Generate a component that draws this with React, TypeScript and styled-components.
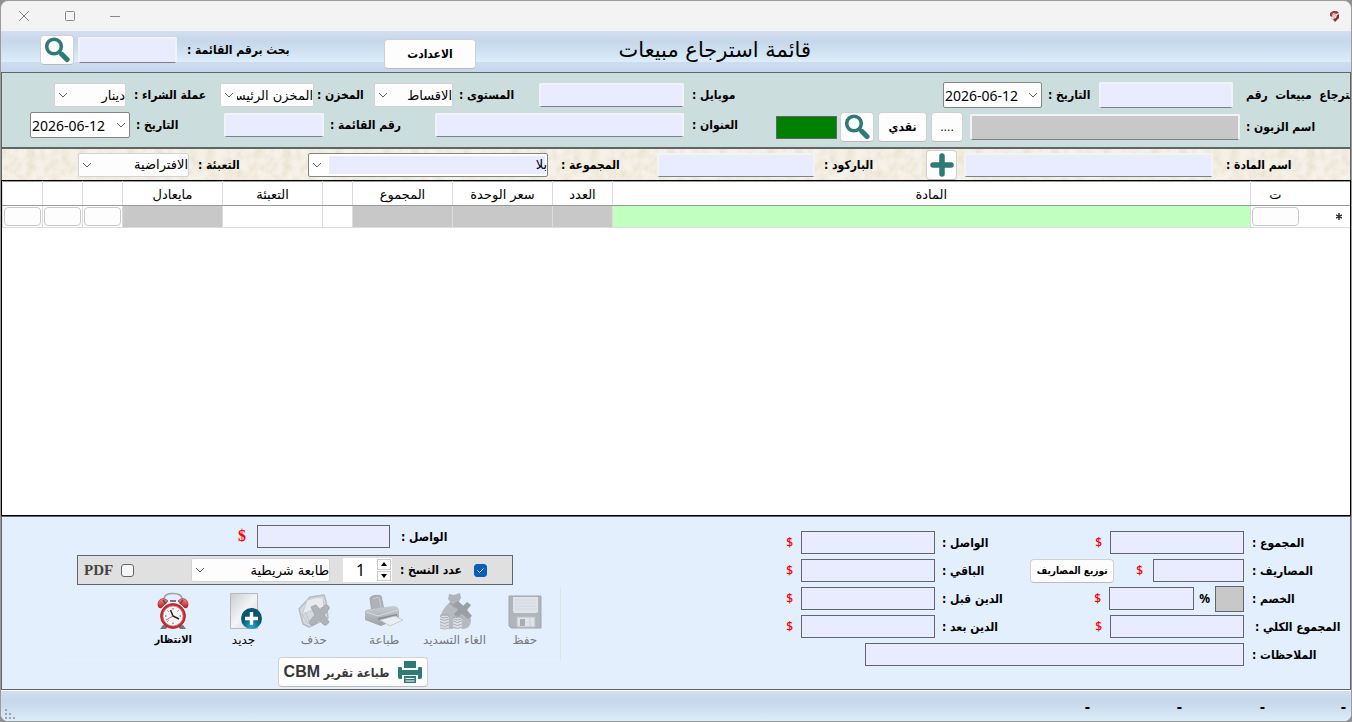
import React from "react";
import styled, { createGlobalStyle, css } from "styled-components";

const sans = `"DejaVu Sans", "Noto Sans", sans-serif`;
const narrow = `"DejaVu Sans Condensed", "DejaVu Sans", sans-serif`;
const teal = "#2f7a75";
const lavender = "#e9ecfe";
const chevron = `url("data:image/svg+xml,%3Csvg xmlns='http://www.w3.org/2000/svg' width='10' height='6'%3E%3Cpath d='M1 1l4 4 4-4' fill='none' stroke='%23606060'/%3E%3C/svg%3E")`;
const parchment = `url("data:image/svg+xml,%3Csvg xmlns='http://www.w3.org/2000/svg' width='128' height='64'%3E%3Cfilter id='n' x='0' y='0' width='100%25' height='100%25'%3E%3CfeTurbulence type='fractalNoise' baseFrequency='.12 .09' numOctaves='4' seed='4' stitchTiles='stitch'/%3E%3CfeColorMatrix values='0 0 0 0 .76 0 0 0 0 .70 0 0 0 0 .54 1.2 0 0 0 -.38'/%3E%3C/filter%3E%3Crect width='128' height='64' fill='%23f6f2e9'/%3E%3Crect width='128' height='64' filter='url(%23n)'/%3E%3C/svg%3E")`;

const GlobalStyle = createGlobalStyle`
  * { box-sizing: border-box; }
  body { margin: 0; background: #8d8f90; font-family: ${sans}; font-size: 12px; color: #000; }
  button, input, select { font-family: inherit; font-size: inherit; color: inherit; margin: 0; }
`;

const Window = styled.div`
  display: flex;
  flex-direction: column;
  min-height: 100vh;
  border: 1px solid #9b9b9b;
  border-radius: 8px;
  overflow: hidden;
  background: #f3f3f3;
`;

const TitleBar = styled.div`
  display: flex;
  flex: none;
  align-items: center;
  justify-content: space-between;
  height: 30px;
  padding: 0 11px 0 15px;
`;

const Caption = styled.div`
  display: flex;
  gap: 30px;
`;

const CaptionButton = styled.button`
  width: 16px;
  height: 16px;
  padding: 0;
  border: 0;
  background: none;
  svg { display: block; }
`;

const Header = styled.header`
  display: grid;
  flex: none;
  grid-template-columns: 540fr 195px 140fr 92px 207px 99fr 4px 34px 39px;
  align-items: center;
  height: 41px;
  padding-bottom: 4px;
  background: linear-gradient(#d4dff0, #c6d7eb 9px, #c9daed 14px, #dceef9 31px, #cfdcee 31px, #c6d7eb);
`;

const Title = styled.h1`
  grid-column: 2;
  margin: 0;
  font-size: 21px;
  font-weight: 400;
  line-height: 30px;
  white-space: nowrap;
`;

const Label = styled.label<{ $pad?: number }>`
  min-width: 0;
  padding-left: ${(p) => p.$pad ?? 6}px;
  font-family: ${narrow};
  font-weight: 700;
  font-size: 12px;
  line-height: 20px;
  text-align: left;
  white-space: nowrap;
`;

const ClippedLabel = styled(Label)`
  display: flex;
  justify-content: flex-end;
  overflow: hidden;
`;

const field = css`
  width: 100%;
  min-width: 0;
  padding: 0 4px;
  border-radius: 2px;
  outline: none;
`;

const TextBox = styled.input<{ $h?: number; $muted?: boolean }>`
  ${field}
  height: ${(p) => p.$h ?? 24}px;
  border: 2px solid #f1f3f5;
  border-bottom: 1px solid #7d8284;
  background: ${(p) => (p.$muted ? "#c8c8c8" : lavender)};
`;

const FlatBox = styled.input<{ $w?: number; $muted?: boolean }>`
  flex: none;
  width: ${(p) => p.$w ?? 134}px;
  height: ${(p) => (p.$muted ? 26 : 23)}px;
  padding: 0 4px;
  border: 1px solid #62666a;
  background: ${(p) => (p.$muted ? "#c8c8c8" : lavender)};
  outline: none;
`;

const DropDown = styled.select<{ $editable?: boolean; $w?: number }>`
  ${field}
  ${(p) => p.$w && `flex: none; width: ${p.$w}px;`}
  appearance: none;
  height: 24px;
  padding: 0 0 0 16px;
  border: 1px solid ${(p) => (p.$editable ? "#858585" : "#d3d3d3")};
  font-size: 13px;
  background: ${chevron} no-repeat 3px 8px, #fdfdfd;
  ${(p) =>
    p.$editable &&
    css`
      background: ${chevron} no-repeat 3px 8px,
        linear-gradient(${lavender}, ${lavender}) no-repeat 20px 2px / calc(100% - 22px) calc(100% - 4px), #fff;
    `}
`;

const DateBox = styled.input`
  ${field}
  height: 26px;
  padding: 0 2px 0 1px;
  border: 1px solid #858585;
  direction: ltr;
  font-family: "Noto Sans", sans-serif;
  font-size: 14px;
  background: ${chevron} no-repeat right 3px center, #fff;
`;

const Button = styled.button<{ $h?: number; $plain?: boolean }>`
  display: flex;
  align-items: center;
  justify-content: center;
  height: ${(p) => p.$h ?? 30}px;
  min-width: 0;
  padding: 0;
  border: 1px solid #d0d0d0;
  border-bottom-color: #bbb;
  border-radius: 4px;
  background: #fdfdfd;
  font-family: ${narrow};
  font-weight: ${(p) => (p.$plain ? 400 : 700)};
  white-space: nowrap;
`;

const SettingsButton = styled(Button)`
  margin-top: 8px;
`;

const SplitButton = styled(Button)`
  width: 84px;
  margin-right: 12px;
  font-size: 10px;
`;

const Details = styled.section`
  display: grid;
  flex: none;
  grid-template-columns: 574fr 774fr;
  padding: 9px 0 5px;
  border: 1px solid #5f6464;
  border-bottom-width: 2px;
  background: #cbdddd;
`;

const Stack = styled.div`
  display: flex;
  flex-direction: column;
  gap: 4px;
  min-width: 0;
`;

const FieldRow = styled.div<{ $cols: string; $h?: number }>`
  display: grid;
  grid-template-columns: ${(p) => p.$cols};
  align-items: center;
  height: ${(p) => p.$h ?? 26}px;
`;

const Balance = styled.div`
  height: 23px;
  border: 1px solid #5f6464;
  background: #008000;
`;

const ItemBar = styled.section`
  flex: none;
  border: solid #5f6464;
  border-width: 0 1px;
  background: ${parchment};
`;

const TableArea = styled.main`
  flex: 1;
  border: 1px solid #000;
  background: #fff;
`;

const Table = styled.table`
  width: 100%;
  border-collapse: collapse;
  table-layout: fixed;
  border-top: 1px solid #9a9a9a;
`;

const Th = styled.th`
  height: 24px;
  padding: 2px 0 0;
  border-bottom: 1px solid #9a9a9a;
  border-left: 1px solid #dcdcdc;
  font-weight: 400;
  font-size: 13px;
  line-height: 18px;
`;

const CornerCell = styled.td`
  border-bottom: 1px solid #9a9a9a;
`;

const Td = styled.td<{ $bg?: string }>`
  height: 22px;
  padding: 0 1px;
  border-bottom: 1px solid #dcdcdc;
  border-left: 1px solid #dcdcdc;
  background: ${(p) => p.$bg ?? "#fff"};
`;

const RowMarker = styled.td`
  padding: 0 8px;
  border-bottom: 1px solid #dcdcdc;
  svg { display: block; }
`;

const CellButton = styled.button`
  display: block;
  width: 100%;
  height: 19px;
  border: 1px solid #c9c9c9;
  border-radius: 4px;
  background: #fdfdfd;
`;

const Footer = styled.footer`
  display: flex;
  flex: none;
  justify-content: space-between;
  height: 174px;
  padding: 8px 0 0 60px;
  border: 1px solid #62666a;
  background: #e3effd;
`;

const Totals = styled.div`
  display: grid;
  grid-template-columns: 106px 214px 27px 68px 134px 22px;
  grid-auto-rows: 23px;
  row-gap: 5px;
  align-items: center;
  padding-top: 6px;
`;

const Cluster = styled.div<{ $gap?: number; $span?: number }>`
  display: flex;
  align-items: center;
  gap: ${(p) => p.$gap ?? 8}px;
  min-width: 0;
  ${(p) => p.$span && `grid-column: span ${p.$span};`}
`;

const Currency = styled.span<{ $big?: boolean }>`
  color: #f00;
  font-family: ${(p) => (p.$big ? `"Liberation Serif", serif` : `"Noto Sans", sans-serif`)};
  font-weight: ${(p) => (p.$big ? 700 : 500)};
  font-size: ${(p) => (p.$big ? 16 : 12)}px;
`;

const Percent = styled.span`
  font: 700 12px "Noto Sans", sans-serif;
`;

const Actions = styled.div`
  display: flex;
  flex-direction: column;
  width: 499px;
`;

const Received = styled.div`
  display: grid;
  grid-template-columns: 123px 133px 20px;
  align-items: center;
  padding-right: 48px;
`;

const PrintBar = styled.div`
  display: flex;
  align-items: center;
  width: 436px;
  height: 30px;
  margin: 7px 48px 0 0;
  padding: 0 25px 0 6px;
  border: 1px solid #62666a;
  background: #e0e0e0;
`;

const Check = styled.input`
  appearance: none;
  flex: none;
  width: 13px;
  height: 13px;
  border: 1px solid #62666a;
  border-radius: 3px;
  background: #f6f6f6;
  &:checked {
    border-color: #0a5db8;
    background: url("data:image/svg+xml,%3Csvg xmlns='http://www.w3.org/2000/svg' width='11' height='11'%3E%3Cpath d='M2.500 5.500l2 2 4-4' fill='none' stroke='white'/%3E%3C/svg%3E") #0a5db8;
  }
`;

const CopiesLabel = styled(Label)`
  width: 82px;
  padding-left: 8px;
`;

const Spinner = styled.div`
  display: flex;
  width: 49px;
  height: 24px;
  padding: 1px;
  background: #fff;
`;

const SpinButtons = styled.div`
  display: flex;
  flex-direction: column;
  gap: 1px;
  width: 14px;
`;

const SpinButton = styled.button`
  display: grid;
  place-items: center;
  flex: 1;
  padding: 0;
  border: 1px solid #ccc;
  background: #fafafa;
`;

const SpinValue = styled.input`
  flex: 1;
  min-width: 0;
  padding: 0;
  border: 0;
  background: none;
  font: 16px "Noto Sans", sans-serif;
  text-align: center;
`;

const PrinterPick = styled(DropDown)`
  margin-right: 13px;
`;

const PdfLabel = styled.label`
  display: flex;
  align-items: center;
  gap: 8px;
  margin-right: auto;
  color: #444;
  font: 700 15px "Liberation Serif", serif;
`;

const Toolbar = styled.div`
  display: flex;
  height: 73px;
  margin-top: 3px;
  padding: 4px 0 0 76px;
  border-bottom: 1px solid #eef1f4;
  border-right: 1px solid #e0e3e6;
`;

const Tool = styled.button`
  display: flex;
  flex: 1 1 70px;
  flex-direction: column;
  align-items: center;
  gap: 1px;
  min-width: 0;
  padding: 0;
  border: 0;
  background: none;
  font-size: 12px;
  line-height: 18px;
  white-space: nowrap;
  &:disabled { color: #77797d; }
  &:disabled svg { opacity: 0.85; }
  &:last-child { font-weight: 700; font-family: ${narrow}; font-size: 11px; }
  svg { display: block; flex: none; }
`;

const ReportButton = styled(Button)`
  position: relative;
  align-self: flex-start;
  gap: 9px;
  width: 150px;
  margin: -4px 133px 0 0;
  color: #383838;
  font-size: 12px;
`;

const Latin = styled.span`
  font: 700 16px "Liberation Sans", sans-serif;
`;

const StatusBar = styled.div`
  display: flex;
  flex: none;
  align-items: center;
  height: 31px;
  padding: 2px 5px 0 3px;
  border-top: 1px solid #fff;
  background: linear-gradient(#d4dff0, #c6d7eb 9px, #c9daed 14px, #dceef9);
  font: 700 16px "Liberation Sans", sans-serif;
`;

const StatusCell = styled.span<{ $w: number }>`
  flex: none;
  width: ${(p) => p.$w}px;
`;

const Grip = styled.svg`
  align-self: flex-end;
  margin: 0 auto 2px 0;
`;

const Magnifier = () => (
  <svg width="26" height="26" viewBox="0 0 26 26" fill="none" stroke={teal} aria-hidden="true">
    <circle cx="10" cy="9.500" r="7.300" strokeWidth="3.600" />
    <path d="M15.500 15l2 2" strokeWidth="3.600" />
    <path d="M18 17.500l5 5" strokeWidth="5.200" strokeLinecap="round" />
  </svg>
);

const Plus = () => (
  <svg width="24" height="24" viewBox="0 0 24 24" stroke={teal} strokeWidth="5.500" strokeLinecap="round" aria-hidden="true">
    <path d="M12 3v18M3 12h18" />
  </svg>
);

const Clock = () => (
  <svg width="36" height="38" viewBox="0 0 36 38" aria-hidden="true">
    <defs>
      <linearGradient id="bell" x2="0" y2="1"><stop stopColor="#ff8a80" /><stop offset="1" stopColor="#c4161c" /></linearGradient>
    </defs>
    <path d="M9 7Q9 1.500 18 1.500T27 7" fill="none" stroke="#9aa0a8" strokeWidth="1.600" />
    <path d="M8 33l-3 4h6l2-3zM28 33l3 4h-6l-2-3z" fill="#70757b" />
    <path d="M3 13C3 6 9 5 13 9L6 16Q3 16 3 13zM33 13C33 6 27 5 23 9l7 7q3 0 3-3z" fill="url(#bell)" stroke="#8e1014" strokeWidth=".6" />
    <path d="M8 8l3 4M28 8l-3 4M15 9h6" stroke="#4d5156" strokeWidth="1.600" />
    <circle cx="18" cy="24" r="12.500" fill="#d8282a" stroke="#8e1014" strokeWidth=".6" />
    <circle cx="18" cy="24" r="10" fill="#f3f4f5" stroke="#a99" strokeWidth=".6" />
    <path d="M18 16v1.500M18 30.500V32M10 24h1.500M24.500 24H26M12.500 18.500l1 1M23.500 18.500l-1 1M12.500 29.500l1-1" stroke="#555" />
    <path d="M15.500 18l2.500 6 6 3" fill="none" stroke="#222" strokeWidth="1.500" />
    <path d="M18 24l-7 4" stroke="#e04040" strokeWidth=".8" />
  </svg>
);

const NewPage = () => (
  <svg width="36" height="38" viewBox="0 0 36 38" aria-hidden="true">
    <defs>
      <linearGradient id="sheet" x2="1" y2="1"><stop stopColor="#c9ced2" /><stop offset=".5" stopColor="#f2f4f5" /><stop offset="1" stopColor="#d5d9dc" /></linearGradient>
      <radialGradient id="orb" cy=".9"><stop stopColor="#22a9d0" /><stop offset="1" stopColor="#0b5674" /></radialGradient>
    </defs>
    <path d="M4.500 1.500h27v35h-27z" fill="url(#sheet)" stroke="#b4b9bd" />
    <circle cx="25.500" cy="26.500" r="10.500" fill="url(#orb)" />
    <path d="M25.500 20v13M19 26.500h13" stroke="#fff" strokeWidth="3.400" />
  </svg>
);

const Discard = () => (
  <svg width="36" height="38" viewBox="0 0 36 38" aria-hidden="true">
    <path d="M3 17l11-12 14-2 2 6 2 17-19 9-6-3z" fill="#d3d6db" stroke="#b0b4ba" strokeWidth="1.500" strokeLinejoin="round" />
    <path d="M11 8q8-3 16-3l1 10-14 4-8 4z" fill="#e8eaee" stroke="#c2c6cb" />
    <path d="M6 22l6 10M9 20l5 11" stroke="#bcc0c5" />
    <path d="M15 15l5-2 4 5 5-5q5 0 4 4l-5 6 5 7q-2 4-5 3l-5-5-5 5q-4 1-5-3l6-7z" fill="#a6aab0" stroke="#999da3" strokeLinejoin="round" />
  </svg>
);

const Printer = () => (
  <svg width="42" height="38" viewBox="0 0 42 38" aria-hidden="true">
    <defs><linearGradient id="prn" x2="0" y2="1"><stop stopColor="#c3c6ca" /><stop offset="1" stopColor="#8f9398" /></linearGradient></defs>
    <path d="M7 6q1-2 5-2.500T18 4l3 14-12 3z" fill="#a4a8ad" stroke="#94989d" />
    <path d="M10 7q4-2 6-1.500l2 10" stroke="#c4c7cb" fill="none" />
    <path d="M2 19q2-2 7-2l21-3q5 0 6 4v8l-18 8L2 28z" fill="url(#prn)" />
    <path d="M3 20l12 4 20-6" fill="none" stroke="#d4d7da" />
    <path d="M15 27l19-4" stroke="#777b80" strokeWidth="2" />
    <path d="M17 28l15-4 8 4-13 6z" fill="#eceef1" stroke="#b6babf" strokeWidth=".8" />
  </svg>
);

const MoneyBag = () => (
  <svg width="36" height="38" viewBox="0 0 36 38" aria-hidden="true">
    <path d="M12 2l5 1 6-2 1 5-3 5h-7l-3-4z" fill="#a6aab0" />
    <path d="M13 10h9q11 8 12 18 0 9-9 9H10Q3 34 3 26q2-9 10-16z" fill="#adb1b7" />
    <path d="M13 11l5 4 5-4" stroke="#8e9298" fill="none" strokeWidth="1.500" />
    <path d="M16 12l5-3 5 5 4-4 4 3-4 5 5 6-4 3-6-5-5 4-3-4 4-4z" fill="#8e9297" />
    <path d="M3 24h9v13H3zM16 26h9v11h-9z" fill="#d9dce0" />
    <g fill="none" stroke="#a2a6ac">
      <ellipse cx="7.500" cy="24" rx="4.500" ry="1.800" /><path d="M3 27q4.500 3 9 0M3 30q4.500 3 9 0M3 33q4.500 3 9 0M3 36q4.500 2 9 0" />
      <ellipse cx="20.500" cy="26" rx="4.500" ry="1.800" /><path d="M16 29q4.500 3 9 0M16 32q4.500 3 9 0M16 35q4.500 3 9 0" />
    </g>
  </svg>
);

const Disk = () => (
  <svg width="36" height="38" viewBox="0 0 36 38" aria-hidden="true">
    <path d="M2 4h32v32H4l-2-2z" fill="#a7abb1" stroke="#979ba1" strokeLinejoin="round" />
    <path d="M6 5h25v15q-1 1-2 1H8q-2 0-2-2z" fill="#dfe2e6" />
    <path d="M8 8h21M8 11h21M8 14h21M8 17h21" stroke="#d2d5da" />
    <path d="M10 25h18v10H10z" fill="#dfe2e5" stroke="#b4b8bd" />
    <path d="M13 27h5v7h-5z" fill="#9ea2a8" />
    <path d="M23 26v9" stroke="#c3c6ca" />
  </svg>
);

const TealPrinter = () => (
  <svg width="24" height="24" viewBox="0 0 24 24" fill={teal} aria-hidden="true">
    <path d="M6 1h12v7H6zM0 8q0-1 1-1h2q1 0 1 2v1h16V9q0-2 1-2h2q1 0 1 1v9q0 2-2 2h-2v-4H4v4H2q-2 0-2-2zM6 16h12v7H6z" />
    <path d="M7.500 18.500h9M7.500 21h9" stroke="#fff" />
  </svg>
);

const Emblem = () => (
  <svg width="10" height="11" viewBox="0 0 10 11" aria-hidden="true">
    <path d="M0 2l3-2 4 0 2 2-3 1-3-1-1 4L0 5z" fill="#a8383f" />
    <path d="M9 3v4l-4 4-2-3 3-1 1-3z" fill="#8e2a32" />
    <path d="M3 3l3 1-2 3-2-1zM1 7l3 3" fill="#d9dadd" stroke="#b8a0a4" strokeWidth=".6" />
  </svg>
);

const columns: { title: string; width?: number; bg?: string; button?: boolean }[] = [
  { title: "ت", width: 50, button: true },
  { title: "المادة", bg: "#c0ffc0" },
  { title: "العدد", width: 60, bg: "#c8c8c8" },
  { title: "سعر الوحدة", width: 100, bg: "#c8c8c8" },
  { title: "المجموع", width: 100, bg: "#c8c8c8" },
  { title: "", width: 30 },
  { title: "التعبئة", width: 100 },
  { title: "مايعادل", width: 100, bg: "#c8c8c8" },
  { title: "", width: 40, button: true },
  { title: "", width: 40, button: true },
  { title: "", width: 40, button: true },
];

const tools = [
  { text: "حفظ", icon: <Disk />, disabled: true },
  { text: "الغاء التسديد", icon: <MoneyBag />, disabled: true },
  { text: "طباعة", icon: <Printer />, disabled: true },
  { text: "حذف", icon: <Discard />, disabled: true },
  { text: "جديد", icon: <NewPage /> },
  { text: "الانتظار", icon: <Clock /> },
];

const statusWidths = [81, 83, 92, 92];

export default function App() {
  return (
    <>
      <GlobalStyle />
      <Window>
        <TitleBar>
          <Caption>
            <CaptionButton aria-label="إغلاق">
              <svg width="16" height="16" fill="none" stroke="#888"><path d="M3 3l10 10M13 3L3 13" /></svg>
            </CaptionButton>
            <CaptionButton aria-label="تكبير">
              <svg width="16" height="16" fill="none" stroke="#888"><rect x="3.500" y="3.500" width="9" height="9" rx="1" /></svg>
            </CaptionButton>
            <CaptionButton aria-label="تصغير">
              <svg width="16" height="16" fill="none" stroke="#888"><path d="M2 8.500h10" /></svg>
            </CaptionButton>
          </Caption>
          <Emblem />
        </TitleBar>

        <Header dir="rtl">
          <Title>قائمة استرجاع مبيعات</Title>
          <span />
          <SettingsButton>الاعدادت</SettingsButton>
          <Label htmlFor="find" $pad={10}>بحث برقم القائمة :</Label>
          <TextBox id="find" $h={26} />
          <span />
          <Button aria-label="بحث"><Magnifier /></Button>
        </Header>

        <Details dir="rtl">
          <Stack>
            <FieldRow $cols="117px 134fr 57px 99px 167fr">
              <ClippedLabel htmlFor="return-no" $pad={13}><span>استرجاع&nbsp; مبيعات&nbsp; رقم</span></ClippedLabel>
              <TextBox id="return-no" $h={26} />
              <Label htmlFor="date1">التاريخ :</Label>
              <DateBox id="date1" defaultValue="2026-06-12" />
            </FieldRow>
            <FieldRow $h={30} $cols="110px 270fr 7px 32px 4px 49px 4px 34px 3px 61px">
              <Label htmlFor="customer">اسم الزبون :</Label>
              <TextBox id="customer" $h={26} $muted readOnly />
              <span />
              <Button $plain>....</Button>
              <span />
              <Button>نقدي</Button>
              <span />
              <Button aria-label="بحث"><Magnifier /></Button>
              <span />
              <Balance />
            </FieldRow>
          </Stack>
          <Stack>
            <FieldRow $cols="92px 145fr 86px 79px 60px 94px 94px 72px 52px">
              <Label htmlFor="mobile" $pad={8}>موبايل :</Label>
              <TextBox id="mobile" />
              <Label htmlFor="level">المستوى :</Label>
              <DropDown id="level"><option>الاقساط</option></DropDown>
              <Label htmlFor="store" $pad={3}>المخزن :</Label>
              <DropDown id="store"><option>المخزن الرئيسي</option></DropDown>
              <Label htmlFor="currency" $pad={8}>عملة الشراء :</Label>
              <DropDown id="currency"><option>دينار</option></DropDown>
            </FieldRow>
            <FieldRow $cols="92px 249fr 111px 100px 94px 100px 28px">
              <Label htmlFor="address" $pad={8}>العنوان :</Label>
              <TextBox id="address" />
              <Label htmlFor="list-no">رقم القائمة :</Label>
              <TextBox id="list-no" />
              <Label htmlFor="date2">التاريخ :</Label>
              <DateBox id="date2" defaultValue="2026-06-12" />
            </FieldRow>
          </Stack>
        </Details>

        <ItemBar dir="rtl">
          <FieldRow $h={31} $cols="137px 249fr 7px 31px 111px 158fr 109px 240fr 119px 111px 76px">
            <Label htmlFor="item" $pad={13}>اسم المادة :</Label>
            <TextBox id="item" />
            <span />
            <Button aria-label="اضافة"><Plus /></Button>
            <Label htmlFor="barcode" $pad={9}>الباركود :</Label>
            <TextBox id="barcode" />
            <Label htmlFor="group" $pad={13}>المجموعة :</Label>
            <DropDown id="group" $editable><option>بلا</option></DropDown>
            <Label htmlFor="pack" $pad={9}>التعبئة :</Label>
            <DropDown id="pack"><option>الافتراضية</option></DropDown>
          </FieldRow>
        </ItemBar>

        <TableArea dir="rtl">
          <Table>
            <colgroup>
              <col width={50} />
              {columns.map((c, i) => <col key={i} width={c.width} />)}
            </colgroup>
            <thead>
              <tr>
                <CornerCell />
                {columns.map((c, i) => <Th key={i} scope="col">{c.title}</Th>)}
              </tr>
            </thead>
            <tbody>
              <tr>
                <RowMarker>
                  <svg width="6" height="7" stroke="#333" strokeWidth="1.500"><path d="M3 0v7M0 2l6 3M6 2L0 5" /></svg>
                </RowMarker>
                {columns.map((c, i) => (
                  <Td key={i} $bg={c.bg}>{c.button && <CellButton aria-label="سطر" />}</Td>
                ))}
              </tr>
            </tbody>
          </Table>
        </TableArea>

        <Footer dir="rtl">
          <Totals>
            <Label htmlFor="sum" $pad={8}>المجموع :</Label>
            <Cluster><FlatBox id="sum" /><Currency>$</Currency></Cluster>
            <span />
            <Label htmlFor="paid" $pad={7}>الواصل :</Label>
            <Cluster $span={2}><FlatBox id="paid" /><Currency>$</Currency></Cluster>

            <Label htmlFor="costs" $pad={8}>المصاريف :</Label>
            <Cluster $gap={10}>
              <FlatBox id="costs" $w={91} /><Currency>$</Currency>
              <SplitButton $h={24}>توزيع المصاريف</SplitButton>
            </Cluster>
            <span />
            <Label htmlFor="rest" $pad={7}>الباقي :</Label>
            <Cluster $span={2}><FlatBox id="rest" /><Currency>$</Currency></Cluster>

            <Label htmlFor="discount" $pad={8}>الخصم :</Label>
            <Cluster>
              <Cluster $gap={5}>
                <FlatBox id="discount" $w={29} $muted readOnly /><Percent>%</Percent>
                <FlatBox aria-label="مبلغ الخصم" $w={85} />
              </Cluster>
              <Currency>$</Currency>
            </Cluster>
            <span />
            <Label htmlFor="before" $pad={7}>الدين قبل :</Label>
            <Cluster $span={2}><FlatBox id="before" /><Currency>$</Currency></Cluster>

            <Label htmlFor="total" $pad={11}>المجموع الكلي :</Label>
            <Cluster><FlatBox id="total" /><Currency>$</Currency></Cluster>
            <span />
            <Label htmlFor="after" $pad={7}>الدين بعد :</Label>
            <Cluster $span={2}><FlatBox id="after" /><Currency>$</Currency></Cluster>

            <Label htmlFor="notes" $pad={8}>الملاحظات :</Label>
            <Cluster $span={5}><FlatBox id="notes" $w={379} /></Cluster>
          </Totals>

          <Actions>
            <Received>
              <Label htmlFor="received" $pad={11}>الواصل :</Label>
              <FlatBox id="received" $w={133} />
              <Label as="span" $pad={1}><Currency $big>$</Currency></Label>
            </Received>
            <PrintBar>
              <Check type="checkbox" id="copies-on" defaultChecked />
              <CopiesLabel htmlFor="copies-on">عدد النسخ :</CopiesLabel>
              <Spinner>
                <SpinButtons>
                  <SpinButton aria-label="زيادة"><svg width="6" height="4"><path d="M3 0l3 4H0z" /></svg></SpinButton>
                  <SpinButton aria-label="إنقاص"><svg width="6" height="4"><path d="M3 4l3-4H0z" /></svg></SpinButton>
                </SpinButtons>
                <SpinValue aria-label="عدد النسخ" defaultValue="1" />
              </Spinner>
              <PrinterPick $w={139} aria-label="الطابعة"><option>طابعة شريطية</option></PrinterPick>
              <PdfLabel><Check type="checkbox" />PDF</PdfLabel>
            </PrintBar>
            <Toolbar>
              {tools.map((t) => (
                <Tool key={t.text} disabled={t.disabled}>{t.icon}{t.text}</Tool>
              ))}
            </Toolbar>
            <ReportButton>
              <TealPrinter />
              <span>طباعة تقرير <Latin>CBM</Latin></span>
            </ReportButton>
          </Actions>
        </Footer>

        <StatusBar dir="rtl">
          {statusWidths.map((w, i) => <StatusCell key={i} $w={w}>-</StatusCell>)}
          <Grip width="11" height="11" fill="#9ba3ad">
            <path d="M1 1h2v2H1zM1 5h2v2H1zM5 5h2v2H5zM1 9h2v2H1zM5 9h2v2H5zM9 9h2v2H9z" />
          </Grip>
        </StatusBar>
      </Window>
    </>
  );
}
